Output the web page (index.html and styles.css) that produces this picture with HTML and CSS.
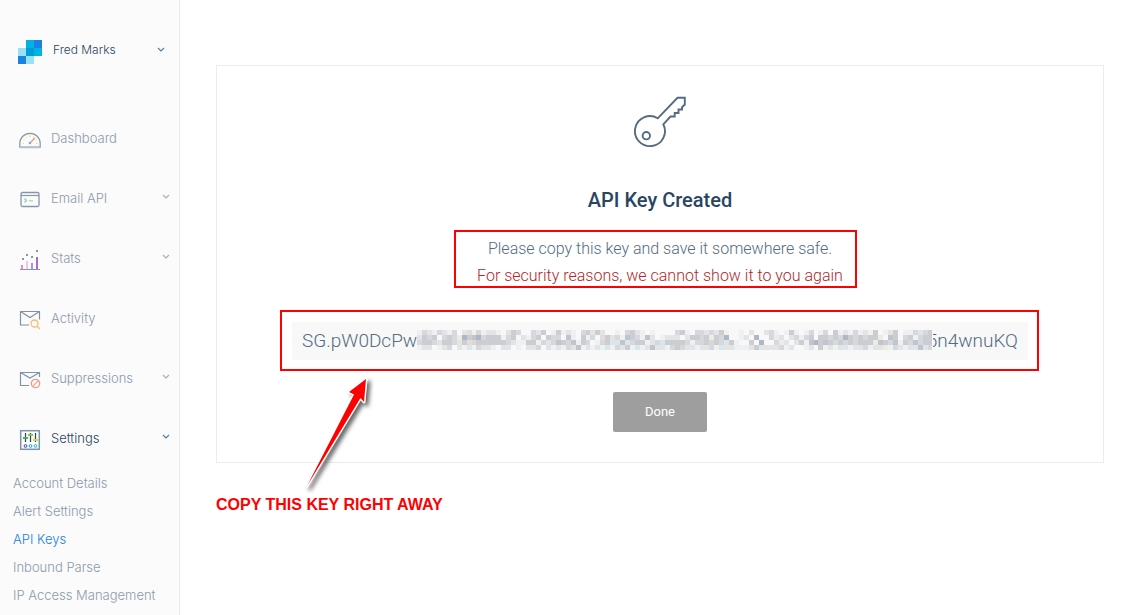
FILE: index.html
```html
<!DOCTYPE html>
<html lang="en">
<head>
<meta charset="utf-8">
<meta name="viewport" content="width=device-width, initial-scale=1">
<title>API Key Created</title>
<link rel="stylesheet" href="styles.css">
</head>
<body>
<div class="app">
  <aside class="sidebar">
    <button class="account" type="button">
      <svg class="logo" width="24" height="24" viewBox="0 0 24 24" shape-rendering="crispEdges" aria-hidden="true">
        <path fill="#00b3e3" d="M8 0h8v8H8zM16 8h8v8h-8z"/>
        <path fill="#1a82e2" d="M16 0h8v8h-8zM0 16h8v8H0z"/>
        <path fill="#99e1f4" d="M0 8h8v8H0zM8 16h8v8H8z"/>
        <path fill="#009dd9" d="M8 8h8v8H8z"/>
      </svg>
      <span class="label">Fred Marks</span>
      <svg class="chevron strong-blue" width="8" height="6" viewBox="0 0 8 6" aria-hidden="true"><path d="M1 1l3 3 3-3"/></svg>
    </button>
    <nav class="nav" aria-label="Main">
      <a class="item" href="#">
        <svg class="icon" width="22" height="22" viewBox="0 0 22 22" fill="none" aria-hidden="true">
          <path stroke="#8796a8" d="M.8 18.2V14.500a10.200 10.200 0 0 1 20.400 0v3.700z" stroke-width="1.200"/>
          <path stroke="#b7c0cb" d="M1 18.500h20" stroke-width="1.500"/>
          <path stroke="#f5dc8a" stroke-width="1.200" d="M3.500 14.500h1.500M17 14.500h1.500M4.500 10.500l1 .6M7 7.800l.8.8M10 7.200h2M14.200 8.500l.8-.8M16.500 11l1-.6"/>
          <path stroke="#f28b7b" stroke-width="1.200" d="M11.800 13.200l4-4.200"/>
          <circle cx="11" cy="14" r="1.300" fill="#6fb1e8"/>
        </svg>
        <span class="label">Dashboard</span>
      </a>
      <a class="item" href="#">
        <svg class="icon" width="22" height="22" viewBox="0 0 22 22" fill="none" aria-hidden="true">
          <rect x="2" y="3.500" width="18" height="14" rx="1.500" stroke="#8796a8" stroke-width="1.300"/>
          <path stroke="#8796a8" stroke-width="1.200" d="M2 6.500h18"/>
          <path stroke="#6fdc9e" stroke-width="1.200" d="M5.500 9.500l2 2-2 2"/>
          <path stroke="#a5dc8a" stroke-width="1.200" d="M10 11.800h4"/>
        </svg>
        <span class="label">Email API</span>
        <svg class="chevron" width="8" height="6" viewBox="0 0 8 6" aria-hidden="true"><path d="M1 1l3 3 3-3"/></svg>
      </a>
      <a class="item" href="#">
        <svg class="icon" width="22" height="22" viewBox="0 0 22 22" shape-rendering="crispEdges" aria-hidden="true">
          <path fill="#8796a8" d="M3 9h2v2H3zM7 5h2v2H7zM12 7h2v2h-2zM17 1h2v2h-2zM1 20h20v1H1z"/>
          <path fill="#fb86b0" d="M2 16h2v4H2z"/><path fill="#eac7f1" d="M7 12h2v8H7z"/>
          <path fill="#a98cf5" d="M12 14h2v6h-2z"/><path fill="#a66fc4" d="M17 8h2v12h-2z"/>
        </svg>
        <span class="label">Stats</span>
        <svg class="chevron" width="8" height="6" viewBox="0 0 8 6" aria-hidden="true"><path d="M1 1l3 3 3-3"/></svg>
      </a>
      <a class="item" href="#">
        <svg class="icon" width="22" height="22" viewBox="0 0 22 22" fill="none" aria-hidden="true">
          <path stroke="#8092a5" stroke-width="1.200" d="M10 16H1.500V2.500h19v8M1.500 2.500l9.500 6 9.500-6"/>
          <circle cx="15.500" cy="14.500" r="3.500" stroke="#f9bd6d" stroke-width="1.300"/>
          <path stroke="#f9bd6d" stroke-width="1.300" d="M18 17l3 3"/>
        </svg>
        <span class="label">Activity</span>
      </a>
      <a class="item" href="#">
        <svg class="icon" width="22" height="22" viewBox="0 0 22 22" fill="none" aria-hidden="true">
          <path stroke="#8092a5" stroke-width="1.200" d="M10 16.500H1.500v-13h19V8M1.500 3.500L11 9l9.500-5.500"/>
          <circle cx="16.500" cy="14.500" r="4.200" stroke="#f09a85" stroke-width="1.300"/>
          <path stroke="#f09a85" stroke-width="1.200" d="M13.700 17.300l5.600-5.600"/>
        </svg>
        <span class="label">Suppressions</span>
        <svg class="chevron" width="8" height="6" viewBox="0 0 8 6" aria-hidden="true"><path d="M1 1l3 3 3-3"/></svg>
      </a>
      <a class="item current" href="#">
        <svg class="icon" width="22" height="22" viewBox="0 0 22 22" fill="none" aria-hidden="true">
          <rect x="1.700" y="1.700" width="18.600" height="18.600" stroke="#8193a6" stroke-width="1.500"/>
          <path stroke="#294661" stroke-width="1.200" d="M6.500 4v9M11.500 4v9M16.500 4v9"/>
          <path stroke="#4caf50" stroke-width="2" d="M4 9h5"/>
          <path stroke="#8bc34a" stroke-width="2" d="M9 6h5"/>
          <path stroke="#cddc39" stroke-width="2" d="M14 11h5"/>
          <circle cx="6.500" cy="17" r="1.400" stroke="#3947a8"/>
          <circle cx="11.500" cy="17" r="1.400" stroke="#2e9cef"/>
          <circle cx="16.500" cy="17" r="1.400" stroke="#22c0d8"/>
        </svg>
        <span class="label">Settings</span>
        <svg class="chevron strong-blue" width="8" height="6" viewBox="0 0 8 6" aria-hidden="true"><path d="M1 1l3 3 3-3"/></svg>
      </a>
      <div class="subnav">
        <a href="#">Account Details</a>
        <a href="#">Alert Settings</a>
        <a class="selected" href="#" aria-current="page">API Keys</a>
        <a href="#">Inbound Parse</a>
        <a href="#">IP Access Management</a>
      </div>
    </nav>
  </aside>
  <main class="content">
    <section class="card">
      <svg class="key-icon" width="52" height="52" viewBox="0 0 52 52" fill="none" stroke="#546b81" stroke-width="1.900" aria-hidden="true">
        <path d="M23.700 22.300L43.500 1.800h7.300v6.700L48 11.200v2.300h-3.500v3.500h-3.800v3.500h-4.200L29.300 28.300A15 15 0 1 1 23.700 22.300z"/>
        <circle cx="12.300" cy="39.700" r="3.700"/>
      </svg>
      <h1>API Key Created</h1>
      <div class="notice">
        <p>Please copy this key and save it somewhere safe.</p>
        <p class="warning">For security reasons, we cannot show it to you again</p>
        <span class="frame notice-frame"></span>
      </div>
      <div class="key">
        <span>SG.pW0DcPw</span>
        <svg class="mosaic" viewBox="0 0 104 4" preserveAspectRatio="none" shape-rendering="crispEdges" role="img" aria-label="Hidden part of the key"></svg>
        <span>5n4wnuKQ</span>
        <span class="frame key-frame"></span>
        <svg class="arrow" width="80" height="130" viewBox="0 0 80 130" aria-hidden="true">
          <path d="M5 121L52 29.500 47 27 64 14 62 37 58.500 33z" fill="#ff0000" stroke="#fff" stroke-width="3" paint-order="stroke" stroke-linejoin="round"/>
        </svg>
      </div>
      <button class="done" type="button">Done</button>
    </section>
    <p class="callout">COPY THIS KEY RIGHT AWAY</p>
  </main>
</div>
<script src="mosaic.js"></script>
</body>
</html>
```
FILE: styles.css
```css
* {
  box-sizing: border-box;
}

body {
  margin: 0;
  background: #fff;
  color: #546b81;
  font-family: Roboto, "Liberation Sans", sans-serif;
}

a {
  color: inherit;
  text-decoration: none;
}

.app {
  display: flex;
  min-height: 100vh;
}

.sidebar {
  flex: 0 0 180px;
  background: #fbfbfb;
  border-right: 1px solid #e9e9e9;
  color: #8b9aab;
  font-family: Inter, "Liberation Sans", sans-serif;
  font-size: 13px;
  font-weight: 300;
}

.account {
  display: flex;
  align-items: center;
  gap: 11px;
  width: 100%;
  margin: 0;
  padding: 40px 14px 45px 18px;
  border: 0;
  background: none;
  color: #294661;
  font: inherit;
  font-size: 12px;
  text-align: left;
}

.label {
  flex: 1;
  margin-bottom: 2px;
  line-height: 20px;
}

.account .label {
  margin-bottom: 4px;
}

.chevron {
  flex: none;
  margin-bottom: 4px;
  fill: none;
  stroke: #a3b0bf;
  stroke-width: 1.2;
}

.chevron.strong-blue {
  stroke: #4f7fae;
}

.item {
  display: flex;
  align-items: center;
  gap: 10px;
  height: 60px;
  padding: 0 9px 0 19px;
}

.item .icon {
  flex: none;
  margin-top: 2px;
}

.current {
  color: #294661;
}

.subnav {
  display: grid;
  padding: 0 0 5px 13px;
  line-height: 28px;
  white-space: nowrap;
}

.selected {
  color: #1a82e2;
}

.content {
  flex: 1;
  min-width: 0;
  padding: 65px 36px 0;
}

.card {
  display: flex;
  flex-direction: column;
  align-items: center;
  padding: 30px 75px;
  border: 1px solid #ebebeb;
}

.card h1 {
  margin: 40px 0 23px;
  color: #294661;
  font-size: 20px;
  font-weight: 500;
  line-height: 24px;
}

.notice {
  position: relative;
  font-size: 16px;
  font-weight: 300;
  line-height: 27px;
  text-align: center;
}

.notice p {
  margin: 0;
}

.warning {
  color: #b3262b;
}

.frame {
  position: absolute;
  border: 2px solid #ff0000;
}

.notice-frame {
  inset: -5px -14px 1px -23px;
}

.key {
  position: relative;
  display: flex;
  align-items: center;
  align-self: stretch;
  height: 38px;
  margin: 33px 0 32px;
  padding: 0 10px 2px;
  background: #f8f8f8;
  font-size: 19px;
  font-weight: 300;
}

.mosaic {
  z-index: 1;
  flex: 1;
  min-width: 0;
  height: 20px;
  margin-right: -6px;
  background: #f8f8f8;
}

.key-frame {
  inset: -12px -11px -11px -12px;
}

.arrow {
  position: absolute;
  top: 43px;
  left: 10px;
  filter: drop-shadow(3px 3px 2px rgba(0, 0, 0, 0.6));
}

.done {
  width: 94px;
  height: 40px;
  padding: 0 0 2px;
  border: 0;
  border-radius: 2px;
  background: #9e9e9e;
  color: #fff;
  font: 400 13px Roboto, "Liberation Sans", sans-serif;
}

.callout {
  margin: 32px 0 0;
  color: #ff0000;
  font: bold 16px/20px "Liberation Sans", Arial, sans-serif;
}
```
FILE: mosaic.js
```js
// Each letter is one cell of the pixelated part of the key.
const tones = {
  a: "#eef0f2", b: "#e2e4e6", c: "#d5d8dc", d: "#cbcdd1", e: "#bfc5cc",
  k: "#adb8c4", w: "#efeae2", p: "#e5dcda", u: "#dbe5ec"
};
const rows = [
  "acbacbac.bpacabba.bdc..cbd.adaba.cdbdb..a.cdba.a....cda.ccbcbda..a.b..bca.ada.ac.ac.dabacabad.abd.aacbcd",
  "bdcd.cdcwkdekcdddacd.bacd.dcc.ea.dac.pdbcaedcaeb.abbb.bddcdwdck..ab.k..cwu.bcacd.ddcdckdcdcddw.ed.cdacdd",
  "cddcbddcbdpcddddddcbaaddacbcedceadc.acdubeucddabcuddddcaccdcdcuda..d.k..cwu.bdaekdedcdcdcdddwedceadcecdd",
  "abb.abc.bauacbba.ub.a.bbc.uabacbeauabauacbdauabeubacdcbuabbcaubbaaabdbbbbcab..ab.dabaubabucaubwacbaubeuc"
];
const svg = document.querySelector(".mosaic");
rows.forEach((row, y) => {
  [...row].forEach((tone, x) => {
    if (!tones[tone]) return;
    const cell = document.createElementNS("http://www.w3.org/2000/svg", "rect");
    cell.setAttribute("x", x);
    cell.setAttribute("y", y);
    cell.setAttribute("width", 1);
    cell.setAttribute("height", 1);
    cell.setAttribute("fill", tones[tone]);
    svg.append(cell);
  });
});
```
